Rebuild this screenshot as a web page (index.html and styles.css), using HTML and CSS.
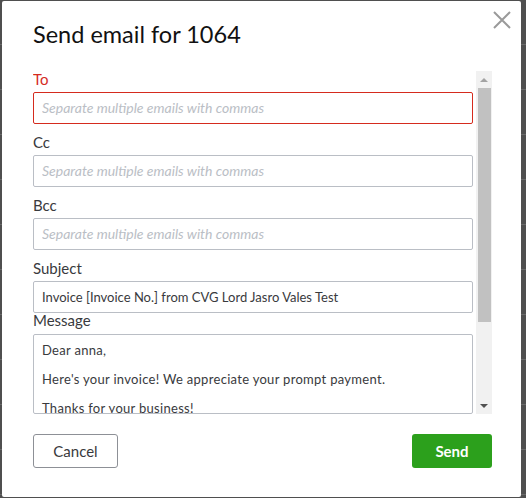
FILE: index.html
```html
<!DOCTYPE html>
<html lang="en">
<head>
    <meta charset="UTF-8">
    <title>Send email</title>
    <link rel="stylesheet" href="styles.css">
</head>
<body>
    <div class="modal">
        <div class="modal-header">
            <h1 class="modal-title">Send email for 1064</h1>
            <button class="close-btn" aria-label="Close">
                <svg width="18" height="18" viewBox="0 0 18 18">
                    <path d="M1 1 L17 17 M17 1 L1 17" stroke="#9a9a9a" stroke-width="2" fill="none"/>
                </svg>
            </button>
        </div>

        <div class="modal-body">
            <div class="fields">
                <div class="field">
                    <label class="field-label error">To</label>
                    <input class="text-input error" type="text" placeholder="Separate multiple emails with commas">
                </div>
                <div class="field">
                    <label class="field-label">Cc</label>
                    <input class="text-input" type="text" placeholder="Separate multiple emails with commas">
                </div>
                <div class="field">
                    <label class="field-label">Bcc</label>
                    <input class="text-input" type="text" placeholder="Separate multiple emails with commas">
                </div>
                <div class="field field-tight">
                    <label class="field-label">Subject</label>
                    <input class="text-input" type="text" value="Invoice [Invoice No.] from CVG Lord Jasro Vales Test">
                </div>
                <div class="field">
                    <label class="field-label label-short">Message</label>
                    <textarea class="text-area">Dear anna,

Here's your invoice! We appreciate your prompt payment.

Thanks for your business!
CVG Lord Jasro Vales Test</textarea>
                </div>
            </div>
            <div class="scrollbar">
                <div class="scroll-btn"><span class="arrow-up"></span></div>
                <div class="scroll-track"><div class="scroll-thumb"></div></div>
                <div class="scroll-btn"><span class="arrow-down"></span></div>
            </div>
        </div>

        <div class="modal-footer">
            <button class="btn btn-cancel">Cancel</button>
            <button class="btn btn-send">Send</button>
        </div>
    </div>
</body>
</html>
```

FILE: styles.css
```css
/* Page behind the dialog */
html, body {
    margin: 0;
    height: 100%;
}

body {
    background-color: #4f4f4f;
    background-image: repeating-linear-gradient(to bottom, transparent 0, transparent 44px, #6a6a6a 44px, #6a6a6a 45px);
    font-family: "Lato", "Open Sans", sans-serif;
    color: #393a3d;
    padding: 1px 5px 1px 2px;
    box-sizing: border-box;
}

.modal {
    background: #fff;
    height: 496px;
    padding: 0 29px 0 31px;
    box-sizing: border-box;
    display: flex;
    flex-direction: column;
    border-radius: 2px;
}

.modal-header {
    display: flex;
    justify-content: space-between;
    align-items: flex-start;
    height: 68px;
}

.modal-title {
    margin: 18px 0 0;
    font-size: 23.5px;
    font-weight: 400;
    line-height: 30px;
    color: #111;
}

.close-btn {
    background: none;
    border: none;
    padding: 0;
    margin: 10px -19px 0 0;
    cursor: pointer;
    line-height: 0;
}

/* Scrolling form area */
.modal-body {
    display: flex;
    height: 345px;
}

.fields {
    flex: 1;
    overflow: hidden;
    padding-right: 3px;
}

.field {
    margin-bottom: 8px;
}

.field-tight {
    margin-bottom: 0;
}

.field-label {
    display: block;
    font-size: 15px;
    line-height: 20px;
    margin-bottom: 3px;
    color: #393a3d;
}

.field-label.error {
    color: #d52b1e;
}

.label-short {
    line-height: 16px;
    margin-top: -1px;
    margin-bottom: 6px;
}

.text-input,
.text-area {
    display: block;
    width: 100%;
    box-sizing: border-box;
    border: 1px solid #babec5;
    border-radius: 2px;
    font-family: inherit;
    font-size: 13px;
    color: #393a3d;
    padding: 0 8px;
    outline: none;
}

.text-input {
    height: 32px;
}

.text-input.error {
    border-color: #d52b1e;
}

.text-input::placeholder {
    color: #babec5;
    font-style: italic;
    font-size: 14px;
}

.text-area {
    height: 80px;
    padding-top: 8px;
    line-height: 14.5px;
    letter-spacing: 0.3px;
    resize: none;
    overflow: hidden;
}

/* Fake scrollbar */
.scrollbar {
    width: 16px;
    margin-top: 2px;
    background: #f1f1f1;
    display: flex;
    flex-direction: column;
}

.scroll-btn {
    height: 17px;
    display: flex;
    align-items: center;
    justify-content: center;
}

.arrow-up {
    border-left: 4px solid transparent;
    border-right: 4px solid transparent;
    border-bottom: 4px solid #a3a3a3;
}

.arrow-down {
    border-left: 4px solid transparent;
    border-right: 4px solid transparent;
    border-top: 4px solid #505050;
}

.scroll-track {
    flex: 1;
    padding: 0 1px 0 2px;
}

.scroll-thumb {
    height: 234px;
    background: #c1c1c1;
}

/* Footer buttons */
.modal-footer {
    display: flex;
    justify-content: space-between;
    margin-top: 20px;
}

.btn {
    height: 34px;
    border-radius: 3px;
    font-family: inherit;
    font-size: 15px;
    cursor: pointer;
}

.btn-cancel {
    width: 85px;
    background: #fff;
    border: 1px solid #8d9096;
    color: #393a3d;
}

.btn-send {
    width: 80px;
    background: #2ca01c;
    border: none;
    color: #fff;
    font-weight: 700;
}
```
